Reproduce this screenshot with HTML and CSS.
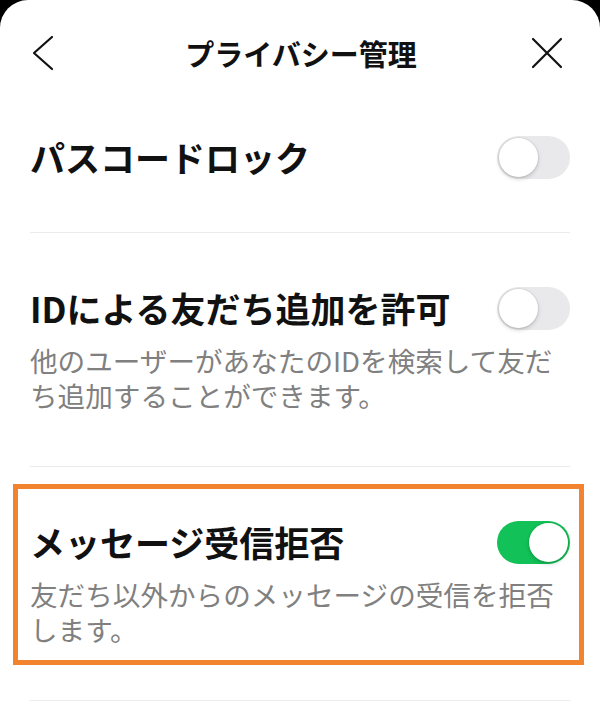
FILE: index.html
```html
<!DOCTYPE html>
<html lang="ja">
<head>
<meta charset="UTF-8">
<title>プライバシー管理</title>
<link rel="stylesheet" href="styles.css">
</head>
<body>

<div class="sheet">
  <!-- ヘッダー -->
  <div class="header">
    <button class="icon-btn back" aria-label="戻る">
      <svg width="24" height="36" viewBox="0 0 24 36"><path d="M21 2 L3 18 L21 34" fill="none" stroke="#111" stroke-width="2.2" stroke-linecap="round" stroke-linejoin="round"/></svg>
    </button>
    <div class="title">プライバシー管理</div>
    <button class="icon-btn close" aria-label="閉じる">
      <svg width="32" height="32" viewBox="0 0 32 32"><path d="M2 2 L30 30 M30 2 L2 30" fill="none" stroke="#111" stroke-width="2.2" stroke-linecap="round"/></svg>
    </button>
  </div>

  <!-- 設定項目 -->
  <div class="row first">
    <div class="row-head">
      <div class="row-title">パスコードロック</div>
      <div class="switch"></div>
    </div>
  </div>

  <div class="row">
    <div class="row-head">
      <div class="row-title">IDによる友だち追加を許可</div>
      <div class="switch"></div>
    </div>
    <p class="row-desc">他のユーザーがあなたのIDを検索して友だち追加することができます。</p>
  </div>

  <div class="row highlight">
    <div class="row-head">
      <div class="row-title">メッセージ受信拒否</div>
      <div class="switch on"></div>
    </div>
    <p class="row-desc">友だち以外からのメッセージの受信を拒否します。</p>
  </div>
</div>

</body>
</html>
```

FILE: styles.css
```css
* {
  box-sizing: border-box;
}

body {
  margin: 0;
  background-color: #000;
  font-family: "Noto Sans CJK JP", "Noto Sans", sans-serif;
  color: #111;
}

.sheet {
  min-height: 100vh;
  background-color: #fff;
  border-radius: 28px 28px 0 0;
  padding: 0 30px;
  overflow: hidden;
}

/* ヘッダー */
.header {
  display: grid;
  grid-template-columns: 1fr auto 1fr;
  align-items: center;
  height: 106px;
}

.icon-btn {
  border: none;
  background: none;
  padding: 0;
  display: flex;
  align-items: center;
  cursor: pointer;
}

.back {
  justify-self: start;
  margin-left: 1px;
}

.close {
  justify-self: end;
  margin-right: 7px;
}

.title {
  font-size: 29px;
  font-weight: 700;
  line-height: 40px;
  margin-left: 2px;
}

/* 設定項目 */
.row {
  position: relative;
  padding: 53px 0 53px;
  border-bottom: 1px solid #ececec;
}

.row.first {
  padding-top: 29px;
}

.row-head {
  display: flex;
  justify-content: space-between;
  align-items: center;
  height: 44px;
}

.row-title {
  font-size: 35px;
  font-weight: 700;
  line-height: 44px;
  white-space: nowrap;
}

.row-desc {
  margin: 13px 0 0;
  font-size: 27.6px;
  line-height: 35px;
  color: #808080;
}

/* トグルスイッチ */
.switch {
  position: relative;
  flex: none;
  width: 73px;
  height: 43px;
  border-radius: 22px;
  background-color: #e9e9eb;
}

.switch::after {
  content: "";
  position: absolute;
  top: 2px;
  left: 2px;
  width: 39px;
  height: 39px;
  border-radius: 50%;
  background-color: #fff;
  box-shadow: 0 2px 4px rgba(0, 0, 0, 0.18), 0 0 0 1px rgba(0, 0, 0, 0.05);
}

.switch.on {
  background-color: #12c157;
}

.switch.on::after {
  left: 32px;
}

/* 強調枠 */
.highlight::after {
  content: "";
  position: absolute;
  top: 17px;
  bottom: 35px;
  left: -17px;
  right: -14px;
  border: 5px solid #f2842f;
  pointer-events: none;
}
```
